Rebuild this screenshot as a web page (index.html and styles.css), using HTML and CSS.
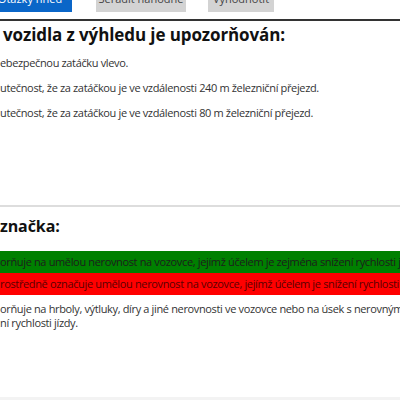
FILE: index.html
```html
<!DOCTYPE html>
<html lang="cs">
<head>
<meta charset="utf-8">
<title>Test</title>
<link rel="stylesheet" href="styles.css">
</head>
<body>
<div class="page">
  <div class="toolbar">
    <span class="btn btn-primary">Otázky hned</span>
    <span class="btn">Seřadit náhodně</span>
    <span class="btn">Vyhodnotit</span>
  </div>
  <div class="rule-dark"></div>
  <section class="question q1">
    <h2 class="q-title">vozidla z výhledu je upozorňován:</h2>
    <ul class="answers">
      <li class="answer">ebezpečnou zatáčku vlevo.</li>
      <li class="answer">utečnost, že za zatáčkou je ve vzdálenosti 240 m železniční přejezd.</li>
      <li class="answer">utečnost, že za zatáčkou je ve vzdálenosti 80 m železniční přejezd.</li>
    </ul>
  </section>
  <div class="rule-light"></div>
  <section class="question q2">
    <h2 class="q-title">značka:</h2>
    <ul class="answers bars">
      <li class="answer correct">orňuje na umělou nerovnost na vozovce, jejímž účelem je zejména snížení rychlosti je</li>
      <li class="answer wrong">rostředně označuje umělou nerovnost na vozovce, jejímž účelem je snížení rychlosti je</li>
      <li class="answer plain">orňuje na hrboly, výtluky, díry a jiné nerovnosti ve vozovce nebo na úsek s nerovným<br>ní rychlosti jízdy.</li>
    </ul>
  </section>
  <div class="rule-faint"></div>
</div>
</body>
</html>
```

FILE: styles.css
```css
html, body {
  margin: 0;
  padding: 0;
  background: #fff;
}
.page {
  width: 400px;
  height: 400px;
  overflow: hidden;
  font-family: "Open Sans", "Liberation Sans", sans-serif;
  color: #333;
  display: flex;
  flex-direction: column;
}
.toolbar {
  display: flex;
  margin-top: -16px;
  margin-left: -12px;
  height: 28px;
  white-space: nowrap;
}
.btn {
  display: flex;
  align-items: center;
  justify-content: center;
  height: 28px;
  background: #d3d3d3;
  color: #444;
  font-size: 11px;
  padding: 0 10px;
  box-sizing: border-box;
}
.btn-primary {
  background: #0a66c8;
  color: #fff;
  width: 84px;
  margin-right: 24px;
}
.btn:nth-child(2) { width: 90px; margin-right: 22px; }
.btn:nth-child(3) { width: 66px; }
.rule-dark {
  height: 2px;
  background: #333;
  margin-top: 7px;
}
.q-title {
  margin: 2px 0 0 3px;
  font-size: 17px;
  font-weight: 700;
  color: #111;
  line-height: 24px;
  letter-spacing: -0.1px;
}
.answers {
  list-style: none;
  margin: 0;
  padding: 0;
}
.q1 .answers {
  margin-top: 3px;
}
.answer {
  font-size: 11px;
  line-height: 25px;
  letter-spacing: -0.35px;
  white-space: nowrap;
}
.rule-light {
  height: 2px;
  background: #ddd;
  margin-top: 80px;
}
.q2 .q-title {
  margin: 7px 0 0 0;
  font-size: 16px;
}
.q2 .answers { margin-top: 13px; }
.bars .correct {
  background: #008000;
  color: #1c1c1c;
  line-height: 22px;
}
.bars .wrong {
  background: #ff0000;
  color: #5a0000;
  line-height: 22px;
}
.bars .plain {
  line-height: 14px;
  padding-top: 7px;
}
.rule-faint {
  margin-top: auto;
  height: 3px;
  background: #f3f3f3;
}
```
